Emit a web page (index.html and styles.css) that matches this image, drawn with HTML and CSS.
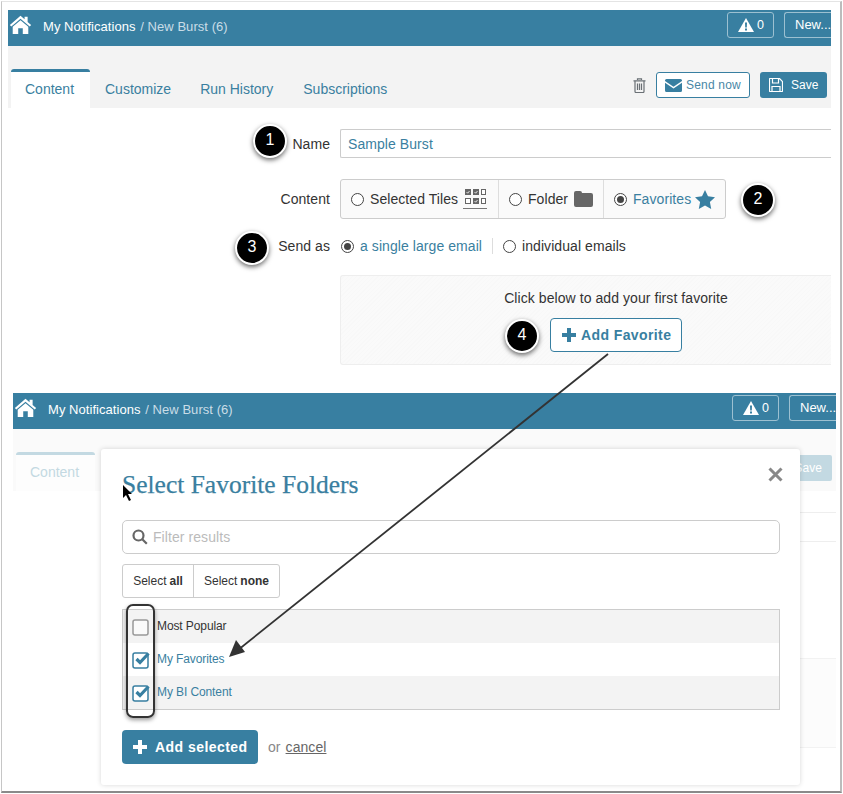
FILE: index.html
```html
<!DOCTYPE html>
<html lang="en">
<head>
<meta charset="utf-8">
<title>New Burst</title>
<link rel="stylesheet" href="styles.css">
</head>
<body>
<div class="frame">

  <section class="panel panel-top">
    <header class="topbar">
      <svg class="home" viewBox="0 0 24 20"><path d="M12 .8 .8 10.400l1.500 1.700L12 4l9.700 8.100 1.500-1.700L19.500 7.300V1.800h-3.200v2.700z"/><path d="M12 5.600 3.800 12.400V20h5.800v-6h4.800v6h5.800v-7.600z"/></svg>
      <div class="crumbs"><span class="crumb-main">My Notifications</span> <span class="crumb-sub">/ New Burst (6)</span></div>
      <div class="bar-btn alert"><svg class="warn" viewBox="0 0 16 14"><path class="warn-t" d="M8 0 16 14H0z"/><path class="warn-m" d="M7 4.500h2l-.2 5H7.200zM7 10.500h2v2H7z"/></svg>0</div>
      <div class="bar-btn new">New...</div>
    </header>
    <div class="subbar">
      <nav class="tabs">
        <div class="tab active">Content</div>
        <div class="tab tab-tight">Customize</div>
        <div class="tab">Run History</div>
        <div class="tab">Subscriptions</div>
      </nav>
      <div class="actions">
        <svg class="trash" viewBox="0 0 13 15"><path d="M4.500 2V.8h4V2M.5 2.800h12M2 3v10.500q0 1 1 1h7q1 0 1-1V3M4.500 5.500v6.500M6.500 5.500v6.500M8.500 5.500v6.500"/></svg>
        <div class="btn-outline"><svg class="env" viewBox="0 0 17 13"><path d="M0 1.500Q0 0 1.500 0h14Q17 0 17 1.500v.6L8.500 7.800 0 2.100z"/><path d="M0 3.800 8.500 9.500 17 3.800v7.700q0 1.500-1.500 1.500h-14Q0 13 0 11.500z"/></svg>Send now</div>
        <div class="btn-solid"><svg class="floppy" viewBox="0 0 14 14"><path d="M1 .5h9.500l3 3V13q0 .5-.5.5H1q-.5 0-.5-.5V1Q.5.500 1 .5zM3.500 1v4h6V1M3 13.500V8.500h8v5"/></svg>Save</div>
      </div>
    </div>
    <div class="form">
      <div class="row row-name">
        <label class="lbl">Name</label>
        <div class="input-name">Sample Burst</div>
      </div>
      <div class="row row-content">
        <label class="lbl">Content</label>
        <div class="segments">
          <div class="seg seg-tiles"><span class="radio"></span>Selected Tiles
            <svg class="tiles" viewBox="0 0 24 21"><g class="tf"><rect x="2" y="1" width="6" height="6"/><rect x="10" y="1" width="6" height="6"/><rect x="10" y="10" width="6" height="6"/></g><path class="tc" d="M3.500 4l1.200 1.200L6.500 3M11.500 4l1.200 1.200L14.500 3M11.500 13l1.200 1.200L14.500 12"/><g class="to"><rect x="18.500" y="1.500" width="4" height="5"/><rect x="2.500" y="10.500" width="5" height="5"/><rect x="18.500" y="10.500" width="4" height="5"/></g><path class="tu" d="M0 20.500h24"/></svg>
          </div>
          <div class="seg seg-folder"><span class="radio"></span>Folder
            <svg class="folder" viewBox="0 0 19 16"><path d="M0 2Q0 0 2 0h4q2 0 2 2h9q2 0 2 2v10q0 2-2 2H2q-2 0-2-2z"/></svg>
          </div>
          <div class="seg seg-fav"><span class="radio on"></span><span class="link">Favorites</span>
            <svg class="star" viewBox="0 0 20 19"><path d="M10 0l3 6.300 7 .9-5.100 4.800 1.300 6.900L10 15.600l-6.200 3.300L5.100 12 0 7.200l7-.9z"/></svg>
          </div>
        </div>
      </div>
      <div class="row row-send">
        <label class="lbl">Send as</label>
        <div class="send-opts">
          <span class="radio on"></span><span class="link">a single large email</span>
          <span class="vsep"></span>
          <span class="radio"></span><span>individual emails</span>
        </div>
      </div>
      <div class="empty-box">
        <p class="empty-text">Click below to add your first favorite</p>
        <div class="btn-add"><svg class="plus" viewBox="0 0 14 14"><path d="M5 0h4v5h5v4H9v5H5V9H0V5h5z"/></svg>Add Favorite</div>
      </div>
    </div>
  </section>

  <section class="panel panel-bottom">
    <header class="topbar">
      <svg class="home" viewBox="0 0 24 20"><path d="M12 .8 .8 10.400l1.500 1.700L12 4l9.700 8.100 1.500-1.700L19.500 7.300V1.800h-3.200v2.700z"/><path d="M12 5.600 3.800 12.400V20h5.800v-6h4.800v6h5.800v-7.600z"/></svg>
      <div class="crumbs"><span class="crumb-main">My Notifications</span> <span class="crumb-sub">/ New Burst (6)</span></div>
      <div class="bar-btn alert"><svg class="warn" viewBox="0 0 16 14"><path class="warn-t" d="M8 0 16 14H0z"/><path class="warn-m" d="M7 4.500h2l-.2 5H7.200zM7 10.500h2v2H7z"/></svg>0</div>
      <div class="bar-btn new">New...</div>
    </header>
    <div class="subbar faded">
      <div class="tab active faded-tab">Content</div>
      <div class="faded-save">Save</div>
    </div>
    <div class="faded-input"></div>
    <div class="faded-box"></div>

    <div class="modal">
      <h2 class="modal-title">Select Favorite Folders</h2>
      <svg class="close" viewBox="0 0 15 15"><path d="M1.500 1.500l12 12M13.500 1.500l-12 12"/></svg>
      <div class="filter">
        <svg class="search" viewBox="0 0 16 16"><circle cx="6.500" cy="6.500" r="5"/><path d="M10.300 10.300l4.500 4.500"/></svg>
        <span>Filter results</span>
      </div>
      <div class="select-group">
        <div class="sel sel-all">Select <b>all</b></div>
        <div class="sel sel-none">Select <b>none</b></div>
      </div>
      <ul class="list">
        <li class="item"><svg class="cb" viewBox="0 0 18 18"><rect class="cb-off" x="1" y="2" width="15" height="15" rx="2"/></svg><span class="item-text">Most Popular</span></li>
        <li class="item sel-item"><svg class="cb" viewBox="0 0 18 18"><rect class="cb-box" x="1" y="2" width="15" height="15" rx="2"/><path class="cb-chk" d="M4.500 8 8 11.500 16.500 2.500"/></svg><span class="item-text">My Favorites</span></li>
        <li class="item sel-item"><svg class="cb" viewBox="0 0 18 18"><rect class="cb-box" x="1" y="2" width="15" height="15" rx="2"/><path class="cb-chk" d="M4.500 8 8 11.500 16.500 2.500"/></svg><span class="item-text">My BI Content</span></li>
      </ul>
      <div class="modal-foot">
        <div class="btn-primary"><svg class="plus-w" viewBox="0 0 14 14"><path d="M5 0h4v5h5v4H9v5H5V9H0V5h5z"/></svg>Add selected</div>
        <span class="or">or <span class="cancel">cancel</span></span>
      </div>
    </div>
  </section>

  <div class="marker m1">1</div>
  <div class="marker m2">2</div>
  <div class="marker m3">3</div>
  <div class="marker m4">4</div>
  <div class="highlight"></div>
  <svg class="arrow" viewBox="0 0 843 794">
    <path class="arrow-line" d="M608 354 238 650"/>
    <path class="arrow-head" d="M229 657 236 640 245 652z"/>
    <path class="cursor" d="M123 485v13l3-3 3 6 2-1-3-6h4z"/>
  </svg>
</div>
</body>
</html>
```
FILE: styles.css
```css
* { box-sizing: border-box; }
html, body { margin: 0; padding: 0; background: #fff; }
body { font-family: "Liberation Sans", Arial, sans-serif; font-size: 14px; color: #333; letter-spacing: .07px; }

.frame {
  position: relative;
  width: 841px;
  height: 792px;
  margin: 1px 0 0 1px;
  overflow: hidden;
  background: #fff;
  border-top: 1px solid #e4e4e4;
  border-left: 1px solid #c6c6c6;
  border-right: 2px solid #bcbcbc;
  border-bottom: 2px solid #8a8a8a;
}

.panel { position: relative; overflow: hidden; width: 823px; }
.panel-top { margin: 8px 0 0 6px; height: 356px; }
.panel-bottom { margin: 27px 0 0 11px; height: 398px; overflow: visible; }

/* top bar */
.topbar {
  height: 36px;
  background: #387fa1;
  display: flex;
  align-items: flex-start;
  color: #fff;
  overflow: hidden;
}
.home { width: 23px; height: 19px; margin: 5px 0 0 1px; fill: #fff; flex: none; }
.crumbs { margin: 9px 0 0 11px; font-size: 13px; line-height: 15px; flex: 1; letter-spacing: .05px; }
.crumb-main { color: #fff; }
.crumb-sub { color: #c9dde7; margin-left: 1px; }
.bar-btn {
  height: 26px;
  margin-top: 2px;
  border: 1px solid #9cc0d1;
  border-radius: 3px;
  font-size: 13px;
  line-height: 24px;
  color: #fff;
  flex: none;
  letter-spacing: 0;
}
.alert { width: 47px; margin-right: 10px; padding-left: 10px; display: flex; align-items: center; gap: 3px; font-size: 12.500px; }
.new { width: 47px; padding-left: 10px; border-right: 0; border-radius: 3px 0 0 3px; white-space: nowrap; overflow: hidden; }
.warn { width: 16px; height: 14px; }
.warn-t { fill: #fff; }
.warn-m { fill: #387fa1; }

/* sub bar */
.subbar {
  height: 62px;
  background: #f3f3f3;
  display: flex;
  align-items: flex-end;
  justify-content: space-between;
  position: relative;
}
.tabs { display: flex; margin-left: 3px; }
.tab {
  height: 39px;
  padding: 0 15px;
  line-height: 41px;
  color: #3a7fa0;
  font-size: 14px;
  letter-spacing: 0;
}
.tab-tight { padding-right: 14px; }
.tab.active {
  background: #fff;
  border-top: 3px solid #387fa1;
  border-radius: 3px 3px 0 0;
  line-height: 35px;
  width: 79px;
  padding: 0 14px;
}
.actions { display: flex; align-items: center; margin: 0 4px 10px 0; }
.trash { width: 13px; height: 15px; margin-right: 10px; fill: none; stroke: #6a7075; stroke-width: 1.200; }
.btn-outline {
  width: 94px; height: 26px;
  border: 1px solid #387fa1;
  border-radius: 3px;
  background: #fff;
  color: #4a87a6;
  font-size: 12px;
  letter-spacing: .2px;
  display: flex; align-items: center;
  padding-left: 8px;
  margin-right: 10px;
}
.env { width: 17px; height: 13px; margin-right: 4px; fill: #387fa1; }
.btn-solid {
  width: 67px; height: 26px;
  background: #387fa1;
  border-radius: 3px;
  color: #fff;
  font-size: 12px;
  letter-spacing: 0;
  display: flex; align-items: center;
  padding-left: 9px;
}
.floppy { width: 14px; height: 14px; margin-right: 8px; fill: none; stroke: #fff; stroke-width: 1.200; }

/* form */
.form { display: flex; flex-direction: column; }
.row { display: flex; align-items: center; }
.lbl { width: 322px; text-align: right; font-size: 14px; color: #333; flex: none; }
.row-name { margin-top: 21px; height: 29px; }
.input-name {
  margin-left: 10px;
  flex: 1;
  height: 29px;
  border: 1px solid #ccc;
  border-right: 0;
  border-radius: 2px 0 0 2px;
  padding-left: 7px;
  line-height: 29px;
  color: #3a7fa0;
}
.row-content { margin-top: 21px; height: 40px; }
.segments {
  margin-left: 10px;
  display: flex;
  height: 40px;
  width: 386px;
  border: 1px solid #ccc;
  border-radius: 3px;
  background: #fafafa;
}
.seg { display: flex; align-items: center; white-space: nowrap; }
.seg-tiles { width: 158px; padding-left: 10px; border-right: 1px solid #ddd; }
.seg-folder { width: 105px; padding-left: 10px; border-right: 1px solid #ddd; }
.seg-fav { flex: 1; padding-left: 10px; }
.radio {
  display: inline-block;
  width: 13px; height: 13px;
  border: 1px solid #444;
  border-radius: 50%;
  background: #fff;
  margin-right: 6px;
  flex: none;
  position: relative;
}
.radio.on::after {
  content: "";
  position: absolute;
  left: 2px; top: 2px;
  width: 7px; height: 7px;
  border-radius: 50%;
  background: #444;
}
.link { color: #3a7fa0; }
.tiles { width: 24px; height: 21px; margin-left: 5px; margin-bottom: 2px; }
.tf rect { fill: #666; }
.tc { fill: none; stroke: #fff; stroke-width: .8; }
.to rect { fill: #fff; stroke: #666; }
.tu { stroke: #777; stroke-width: 1; }
.folder { width: 19px; height: 16px; margin-left: 6px; fill: #666; }
.star { width: 20px; height: 19px; margin-left: 4px; fill: #387fa1; }
.row-send { margin-top: 16px; height: 22px; }
.send-opts { margin-left: 11px; display: flex; align-items: center; }
.vsep { width: 1px; height: 16px; background: #ddd; margin: 0 10px; }
.empty-box {
  margin: 18px 0 0 332px;
  height: 90px;
  border: 1px solid #eee;
  border-right: 0;
  border-radius: 3px 0 0 3px;
  background: repeating-linear-gradient(135deg, #fafafa 0 2px, #f8f8f8 2px 3px);
  display: flex;
  flex-direction: column;
  align-items: center;
  padding-left: 60px;
}
.empty-text { margin: 14px 0 0; line-height: 16px; color: #333; }
.btn-add {
  margin-top: 12px;
  width: 132px; height: 34px;
  border: 1px solid #387fa1;
  border-radius: 4px;
  background: #fff;
  color: #387fa1;
  font-weight: bold;
  letter-spacing: .4px;
  display: flex; align-items: center;
  padding-left: 11px;
}
.plus { width: 14px; height: 14px; margin-right: 5px; fill: #387fa1; }

/* faded backdrop */
.faded { background: #fafafa; position: relative; }
.tab.faded-tab { color: #c3d9e2; border-top-color: #c3d9e2; background: #fdfdfd; margin-left: 3px; }
.faded-save {
  width: 46px; height: 26px;
  background: #c3d9e2;
  border-radius: 2px;
  color: #fff;
  font-size: 12px;
  line-height: 26px;
  text-align: right;
  padding-right: 10px;
  margin: 0 4px 10px 0;
}
.faded-input { margin: 21px 0 0 332px; height: 30px; border: 1px solid #eee; border-width: 1px 0; }
.faded-box { margin: 116px 0 0 332px; height: 90px; background: #fcfcfc; border: 1px solid #f2f2f2; border-width: 1px 0; }

/* modal */
.modal {
  position: absolute;
  left: 88px; top: 56px;
  width: 699px; height: 336px;
  background: #fff;
  border-radius: 3px;
  box-shadow: 0 0 5px rgba(0,0,0,.16);
  padding: 0 20px 0 21px;
}
.modal-title {
  margin: 21px 0 0;
  height: 30px;
  font: normal 25.500px/30px "Liberation Serif", serif;
  color: #3a7fa0;
  letter-spacing: 0;
  -webkit-text-stroke: .25px #3a7fa0;
}
.close { position: absolute; right: 17px; top: 18px; width: 15px; height: 15px; fill: none; stroke: #888; stroke-width: 3; }
.filter {
  margin-top: 20px;
  height: 34px;
  width: 658px;
  border: 1px solid #ccc;
  border-radius: 5px;
  display: flex; align-items: center;
  padding-left: 9px;
  color: #bbb;
}
.search { width: 16px; height: 16px; margin-right: 5px; fill: none; stroke: #666; stroke-width: 2.200; }
.select-group {
  margin-top: 10px;
  display: flex;
  width: 158px; height: 34px;
  border: 1px solid #ccc;
  border-radius: 3px;
  font-size: 12px;
  letter-spacing: 0;
}
.sel { display: flex; align-items: center; justify-content: center; gap: 3px; color: #333; }
.sel-all { width: 71px; border-right: 1px solid #ccc; }
.sel-none { flex: 1; }
.list {
  list-style: none;
  margin: 11px 0 0;
  padding: 0;
  width: 658px;
  height: 101px;
  border: 1px solid #ccc;
}
.item {
  height: 33px;
  display: flex; align-items: center;
  padding-left: 9px;
  font-size: 12px;
  letter-spacing: -.1px;
  color: #333;
}
.item-text { margin-bottom: 2px; }
.item:nth-child(odd) { background: #f3f3f3; }
.sel-item { color: #3a7fa0; }
.cb { width: 18px; height: 18px; margin-right: 7px; flex: none; }
.cb-off { fill: #fafafa; stroke: #999; stroke-width: 1.500; }
.cb-box { fill: #fff; stroke: #387fa1; stroke-width: 1.500; }
.cb-chk { fill: none; stroke: #387fa1; stroke-width: 3.200; }
.modal-foot { margin-top: 20px; display: flex; align-items: center; }
.btn-primary {
  width: 136px; height: 34px;
  background: #387fa1;
  border-radius: 4px;
  color: #fff;
  font-weight: bold;
  letter-spacing: .45px;
  display: flex; align-items: center;
  padding-left: 11px;
}
.plus-w { width: 14px; height: 14px; margin-right: 8px; fill: #fff; }
.or { margin-left: 10px; color: #888; }
.cancel { color: #666; text-decoration: underline; margin-left: 1px; }

/* annotations */
.marker {
  position: absolute;
  width: 34px; height: 34px;
  border-radius: 50%;
  background: #000;
  border: 2px solid #fff;
  box-shadow: 0 2px 5px rgba(0,0,0,.6);
  color: #fff;
  text-align: center;
  font-size: 16px;
  line-height: 28px;
  letter-spacing: 0;
}
.m1 { left: 251px; top: 122px; }
.m2 { left: 739px; top: 181px; }
.m3 { left: 233px; top: 229px; }
.m4 { left: 503px; top: 317px; }
.highlight {
  position: absolute;
  left: 124px; top: 602px;
  width: 29px; height: 114px;
  border: 2px solid #333;
  border-radius: 7px;
  box-shadow: 0 2px 4px rgba(0,0,0,.4);
}
.arrow { position: absolute; left: -2px; top: -2px; width: 843px; height: 794px; pointer-events: none; }
.arrow-line { stroke: #333; stroke-width: 1.800; fill: none; }
.arrow-head { fill: #333; }
.cursor { fill: #000; }
```
